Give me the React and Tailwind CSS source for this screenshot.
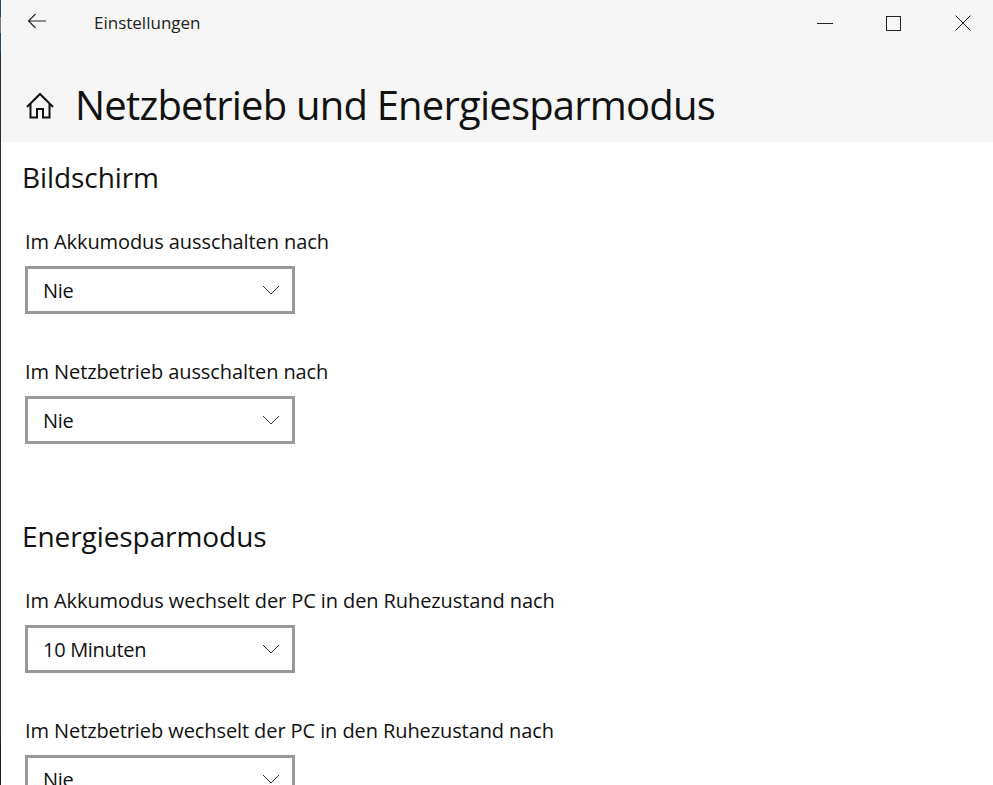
const font = { fontFamily: '"Open Sans", "Noto Sans", sans-serif' };

function Chevron() {
  return (
    <svg width="18" height="10" viewBox="0 0 18 10" fill="none" stroke="#333" strokeWidth="1">
      <path d="M1 1 L9 9 L17 1" />
    </svg>
  );
}

function Field({ label, value, className = "" }) {
  return (
    <div className={className}>
      <div className="h-[20px] text-[20px] leading-[20px] tracking-[-0.09px] text-[#111] whitespace-nowrap">{label}</div>
      <div className="mt-[14px] w-[270px] h-[48px] shrink-0 border-[3px] border-[#999999] bg-white flex items-center justify-between pl-[15px] pr-[12px]">
        <span className="mt-[2px] text-[20px] leading-[24px] tracking-[-0.3px] text-[#111]">{value}</span>
        <Chevron />
      </div>
    </div>
  );
}

export default function App() {
  return (
    <div style={font} className="w-[993px] h-[785px] overflow-hidden bg-white flex">
      <div className="w-px shrink-0 flex flex-col">
        <div className="h-[17px] bg-[#1f4a70]" />
        <div className="h-[16px] bg-[#6f7b85]" />
        <div className="h-[20px] bg-[#1f4a70]" />
        <div className="flex-1 bg-[#2f2f2f]" />
        <div className="h-[42px] bg-[#1a1a1a]" />
      </div>
      <div className="flex-1 min-w-0">
        <header className="h-[142px] bg-[#f6f6f6] flex flex-col">
          <div className="h-[46px] flex items-center">
            <svg className="ml-[26px] mb-[4px]" width="20" height="16" viewBox="0 0 20 16" fill="none" stroke="#222" strokeWidth="1.1">
              <path d="M19 8 H1.5 M8.5 1 L1.5 8 L8.5 15" />
            </svg>
            <span className="ml-[47px] text-[17px] text-[#222]">Einstellungen</span>
            <div className="ml-auto flex items-center">
              <div className="w-[16px] h-px bg-[#222]" />
              <div className="ml-[53px] w-[15px] h-[15px] border border-[#222]" />
              <svg className="ml-[54px] mr-[22px]" width="16" height="16" viewBox="0 0 16 16" fill="none" stroke="#222" strokeWidth="1">
                <path d="M0.5 0.5 L15.5 15.5 M15.5 0.5 L0.5 15.5" />
              </svg>
            </div>
          </div>
          <div className="mt-[29px] flex items-center h-[60px]">
            <svg className="ml-[24px] mt-[1px]" width="30" height="27" viewBox="0 0 30 27" fill="none" stroke="#111" strokeWidth="2">
              <path d="M2 15 L15 2 L28 15 M5.5 11.5 V25.5 H12 V17 H18 V25.5 H24.5 V11.5" />
            </svg>
            <h1 className="ml-[20px] text-[40px] leading-[60px] tracking-[-0.8px] font-normal text-[#111] whitespace-nowrap">Netzbetrieb und Energiesparmodus</h1>
          </div>
        </header>
        <main className="pl-[22px] flex flex-col">
          <h2 className="-ml-px mt-[15px] h-[40px] text-[28px] leading-[40px] tracking-[-0.08px] text-[#111]">Bildschirm</h2>
          <Field className="ml-[2px] mt-[35px]" label="Im Akkumodus ausschalten nach" value="Nie" />
          <Field className="ml-[2px] mt-[48px]" label="Im Netzbetrieb ausschalten nach" value="Nie" />
          <h2 className="-ml-px mt-[72px] h-[40px] text-[28px] leading-[40px] tracking-[-0.08px] text-[#111]">Energiesparmodus</h2>
          <Field className="ml-[2px] mt-[35px]" label="Im Akkumodus wechselt der PC in den Ruhezustand nach" value="10 Minuten" />
          <Field className="ml-[2px] mt-[48px]" label="Im Netzbetrieb wechselt der PC in den Ruhezustand nach" value="Nie" />
        </main>
      </div>
    </div>
  );
}
